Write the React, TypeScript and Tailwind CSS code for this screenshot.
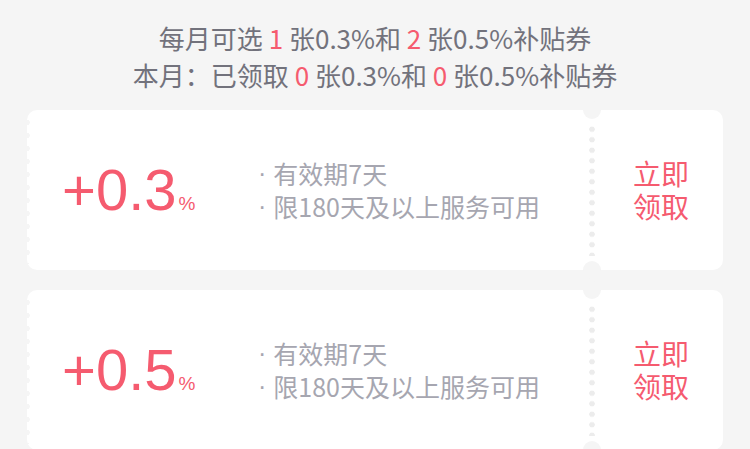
import React from 'react';

const coupons = [
    { rate: '0.3', lines: ['有效期7天', '限180天及以上服务可用'] },
    { rate: '0.5', lines: ['有效期7天', '限180天及以上服务可用'] },
];

const Red: React.FC<{ children: React.ReactNode }> = ({ children }) => (
    <span className="text-[#f55b6f]"> {children} </span>
);

const CouponCard: React.FC<{ rate: string; lines: string[] }> = ({ rate, lines }) => (
    <div className="relative flex h-[160px] rounded-[10px] bg-white">
        {/* scalloped left edge */}
        <div className="absolute left-[-3px] top-[6px] bottom-[6px] w-[6px] bg-[radial-gradient(circle,#f5f5f5_2.5px,transparent_3px)] bg-[length:6px_13px]" />

        <div className="flex flex-1 items-center pl-[35px]">
            <div className="flex w-[196px] items-baseline text-[#f55b6f] font-['Liberation_Sans',sans-serif]">
                <span className="text-[58px] leading-none">+{rate}</span>
                <span className="ml-[2px] text-[19px] leading-none">%</span>
            </div>
            <div className="flex flex-col text-[25px] leading-[33px] text-[#a6a6b0]">
                {lines.map((l) => (
                    <div key={l} className="flex items-center">
                        <span className="mr-[7px] font-['Liberation_Sans',sans-serif]">·</span>
                        <span>{l}</span>
                    </div>
                ))}
            </div>
        </div>

        {/* perforated divider */}
        <div className="relative ml-[-3px] w-[6px]">
            <div className="absolute left-1/2 top-[-9px] h-[18px] w-[18px] -translate-x-1/2 rounded-full bg-[#f5f5f5]" />
            <div className="absolute left-1/2 bottom-[-9px] h-[18px] w-[18px] -translate-x-1/2 rounded-full bg-[#f5f5f5]" />
            <div className="absolute inset-x-0 top-[14px] bottom-[14px] bg-[radial-gradient(circle,#ececec_2.5px,transparent_3px)] bg-[length:6px_10.5px]" />
        </div>

        <div className="flex w-[128px] items-center justify-center pl-[4px]">
            <button className="w-[56px] text-center text-[28px] leading-[33px] text-[#f55b6f]">
                立即领取
            </button>
        </div>
    </div>
);

const App: React.FC = () => {
    return (
        <main className="min-h-screen overflow-hidden bg-[#f5f5f5] pt-[19px] font-['Noto_Sans_CJK_SC',sans-serif]">
            <div className="text-center text-[26px] leading-[37px] text-[#72727c]">
                <div>
                    每月可选<Red>1</Red>张0.3%和<Red>2</Red>张0.5%补贴券
                </div>
                <div>
                    本月：已领取<Red>0</Red>张0.3%和<Red>0</Red>张0.5%补贴券
                </div>
            </div>

            <div className="mt-[17px] flex flex-col gap-[20px] px-[27px]">
                {coupons.map((c) => (
                    <CouponCard key={c.rate} rate={c.rate} lines={c.lines} />
                ))}
            </div>
        </main>
    );
};

export default App;
